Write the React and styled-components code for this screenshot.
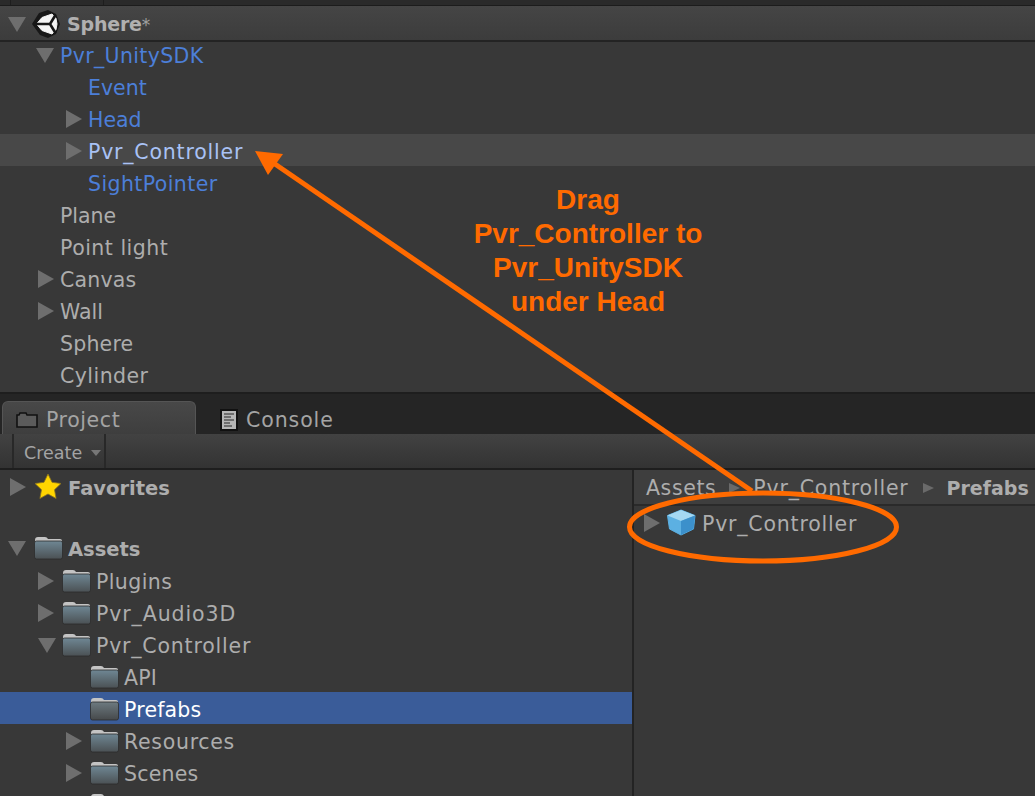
import React from 'react';
import styled, { createGlobalStyle } from 'styled-components';

const Global = createGlobalStyle`
  html, body { margin: 0; padding: 0; background: #383838; }
  body { width: 1035px; height: 796px; overflow: hidden; }
`;
const Page = styled.div`
  position: relative; width: 1035px; height: 796px; overflow: hidden;
  background: #383838; display: flex; flex-direction: column;
  font-family: "DejaVu Sans", "Open Sans", sans-serif; font-size: 20.5px; color: #adadad;
`;
const TopStrip = styled.div`
  height: 5px; flex: none; background: #2a2a2a; display: flex; padding-left: 10px; gap: 92px;
  border-bottom: 1px solid #1c1c1c;
  & > i { width: 1px; background: #1e1e1e; }
`;
const SceneHeader = styled.div`
  height: 36px; flex: none; display: flex; align-items: center; box-sizing: border-box;
  background: linear-gradient(#454545, #3c3c3c); border-bottom: 2px solid #232323; padding: 2px 0 0 8px;
`;
const LogoSlot = styled.span`display: inline-flex; margin-left: 6px; flex: none;`;
const SceneName = styled.span`font-weight: 700; color: #b0b0b0; margin-left: 7px; font-size: 19px; letter-spacing: -.2px;
  & > small { font-weight: 400; font-size: 17px; color:#a0a0a0; }`;
const Hierarchy = styled.div`height: 354px; margin-top: -4px; flex: none; display: flex; flex-direction: column;`;
const Row = styled.div`
  height: 32px; flex: none; display: flex; align-items: center; box-sizing: border-box;
  padding: ${p => p.$top ?? 4}px 0 0 ${p => p.$indent}px;
  background: ${p => p.$bg || 'transparent'};
  color: ${p => p.$color || '#adadad'};
  font-weight: ${p => p.$bold ? 700 : 400};
  font-size: ${p => p.$bold ? '19.5px' : 'inherit'};
  letter-spacing: ${p => p.$track ?? 0.2}px; white-space: nowrap;
`;
const ArrowSlot = styled.span`width: ${p => p.$w ?? 22}px; flex: none; display: flex; justify-content: flex-start; margin-top: -2px;`;
const IconGap = styled.span`display: inline-flex; margin: -4px ${p => p.$gap ?? 6}px 0 0; flex: none;`;
const TabBar = styled.div`
  height: 42px; flex: none; background: #252525; display: flex; align-items: flex-end;
  border-top: 2px solid #1e1e1e; box-sizing: border-box; padding-left: 2px;
`;
const Tab = styled.div`
  height: ${p => p.$active ? 33 : 30}px; box-sizing: border-box;
  display: flex; align-items: center; gap: 8px; padding: ${p => p.$active ? 3 : 1}px 0 0 ${p => p.$active ? 13 : 24}px;
  ${p => p.$active ? 'width:194px; background: linear-gradient(#484848,#3e3e3e); border-radius: 6px 6px 0 0; border: 1px solid #555; border-bottom: none;' : ''}
  color: #a4a4a4; letter-spacing: ${p => p.$active ? .6 : .9}px;
`;
const Toolbar = styled.div`
  height: 36px; flex: none; display: flex; box-sizing: border-box; padding-left: 12px;
  background: linear-gradient(#424242, #333); border-bottom: 2px solid #1e1e1e;
`;
const CreateButton = styled.div`
  width: 94px; box-sizing: border-box; display: flex; align-items: center; gap: 9px; padding: 3px 0 0 10px;
  border-left: 2px solid #282828; border-right: 2px solid #282828; font-size: 17.5px; color: #a4a4a4;
`;
const Panels = styled.div`flex: 1; display: flex; min-height: 0;`;
const LeftPanel = styled.div`width: 632px; flex: none; display: flex; flex-direction: column;`;
const Spacer = styled.div`height: 30px; flex: none;`;
const RightPanel = styled.div`flex: 1; border-left: 2px solid #232323; display: flex; flex-direction: column;`;
const Crumbs = styled.div`
  height: 36px; flex: none; display: flex; align-items: center; box-sizing: border-box; padding: 2px 0 0 12px;
  background: #3e3e3e; border-bottom: 2px solid #2a2a2a; letter-spacing: .6px; white-space: nowrap;
  & > b { font-size: 19px; letter-spacing: 0; }
`;
const CrumbSep = styled.span`display: inline-flex; margin: 0 ${p => p.$r}px 0 ${p => p.$l}px;`;
const CrumbPath = styled.span`letter-spacing: .8px;`;
const Overlay = styled.svg`position: absolute; left: 0; top: 0; pointer-events: none;`;
const Note = styled.div`
  position: absolute; left: 438px; top: 183px; width: 300px; text-align: center;
  font-family: "Liberation Sans", Arial, sans-serif; font-weight: 700; font-size: 28px; line-height: 34px; color: #ff6a00;
`;

const Tri = ({ down, c = '#6e6e6e' }) => (
  <svg width="18" height="18" viewBox="0 0 18 18">
    {down ? <path d="M0 2h18l-9 15z" fill={c} /> : <path d="M0 0l16 9-16 9z" fill={c} />}
  </svg>
);
const Folder = ({ dim }) => (
  <svg width="29" height="25" viewBox="0 0 29 25">
    <defs>
      <linearGradient id={dim ? 'fd' : 'fg'} x1="0" y1="0" x2="0" y2="1">
        <stop offset="0" stopColor={dim ? '#6d7a80' : '#6f8794'} />
        <stop offset="1" stopColor={dim ? '#46494b' : '#4b5154'} />
      </linearGradient>
    </defs>
    <path d="M1 5q0-3 3-3h7q2 0 3 2h12q2 0 2 2v3H1z" fill="#c4c4c4" />
    <rect x="0.500" y="6" width="28" height="18" rx="2" fill={`url(#${dim ? 'fd' : 'fg'})`} stroke="#2c2c2c" strokeWidth=".8" />
  </svg>
);
const UnityLogo = () => (
  <svg width="28" height="28" viewBox="0 0 28 28">
    <path d="M16 0l8 4 4 10-4 10-8 4-8-3-8-11 7-11z" fill="#171717" />
    <path d="M4.500 14L10 7.500 20 4l4 4.500L25 14l-1 5.500L20 24l-10-3.500z" fill="#f4f4f4" stroke="#f4f4f4" strokeLinejoin="round" />
    <path d="M18 14H4M18 14l5.500-9M18 14l5.500 9" stroke="#171717" strokeWidth="2.600" fill="none" />
  </svg>
);
const Star = () => (
  <svg width="28" height="26" viewBox="0 0 28 26">
    <path d="M14 1l4 8.300 9 1.200-6.500 6.200 1.600 8.800L14 21l-8.100 4.500 1.600-8.800L1 10.500l9-1.200z" fill="#ffd500" stroke="#8a7420" strokeWidth=".8" />
  </svg>
);
const Cube = () => (
  <svg width="29" height="27" viewBox="0 0 29 27">
    <path d="M14 1L28 6.500 26.500 20 14 26 2.500 20 .5 6.500z" fill="#5cb0e2" stroke="#5cb0e2" strokeLinejoin="round" />
    <path d="M14 1L28 6.500 14 12 .5 6.500z" fill="#a5d8f2" />
    <path d="M14 12L28 6.500 26.500 20 14 26z" fill="#3c90cb" />
  </svg>
);
const TabFolder = () => (
  <svg width="22" height="18" viewBox="0 0 22 18">
    <path d="M1 16V4h2l1-2h6l1 2h10v12z" fill="#5b5b5b" stroke="#111" strokeWidth="1.600" />
  </svg>
);
const ConsoleIcon = () => (
  <svg width="18" height="22" viewBox="0 0 18 22">
    <rect width="18" height="22" fill="#111" />
    <rect x="2" y="2" width="14" height="18" fill="#b5b5b5" />
    <path d="M4 5h10M4 8h7M4 11h10M4 14h6M4 17h8" stroke="#555" strokeWidth="1.300" />
  </svg>
);
const SmallTri = () => (
  <svg width="13" height="12" viewBox="0 0 13 12"><path d="M1 1l11 5-11 5z" fill="#6a6a6a" /></svg>
);

const BLUE = '#4c7fd8';
const scene = [
  { t: 'Pvr_UnitySDK', i: 36, a: 'd', c: BLUE, w: 24, k: .35 },
  { t: 'Event', i: 88, c: BLUE, k: 0 },
  { t: 'Head', i: 66, a: 'r', c: BLUE, k: 0 },
  { t: 'Pvr_Controller', i: 66, a: 'r', c: '#a9c2f5', bg: '#484848', k: .8 },
  { t: 'SightPointer', i: 88, c: BLUE, k: .4 },
  { t: 'Plane', i: 60, k: 0 },
  { t: 'Point light', i: 60, k: .5 },
  { t: 'Canvas', i: 38, a: 'r' },
  { t: 'Wall', i: 38, a: 'r', k: 0 },
  { t: 'Sphere', i: 60 },
  { t: 'Cylinder', i: 60, k: .45 },
];
const files = [
  { t: 'Plugins', i: 38, a: 'r', k: .4 },
  { t: 'Pvr_Audio3D', i: 38, a: 'r', k: .9 },
  { t: 'Pvr_Controller', i: 38, a: 'd', k: .8 },
  { t: 'API', i: 90 },
  { t: 'Prefabs', i: 90, sel: true },
  { t: 'Resources', i: 66, a: 'r', w: 24, k: .7 },
  { t: 'Scenes', i: 66, a: 'r', w: 24 },
  { t: '', i: 90 },
];

export default function App() {
  return (
    <Page>
      <Global />
      <TopStrip><i /><i /></TopStrip>
      <SceneHeader>
        <Tri down />
        <LogoSlot><UnityLogo /></LogoSlot>
        <SceneName>Sphere<small>*</small></SceneName>
      </SceneHeader>
      <Hierarchy>
        {scene.map(r => (
          <Row key={r.t} $indent={r.i} $color={r.c} $bg={r.bg} $track={r.k}>
            {r.a && <ArrowSlot $w={r.w}><Tri down={r.a === 'd'} /></ArrowSlot>}
            {r.t}
          </Row>
        ))}
      </Hierarchy>
      <TabBar>
        <Tab $active><TabFolder />Project</Tab>
        <Tab><ConsoleIcon />Console</Tab>
      </TabBar>
      <Toolbar>
        <CreateButton>Create
          <svg width="10" height="6" viewBox="0 0 10 6"><path d="M0 0h10L5 6z" fill="#777" /></svg>
        </CreateButton>
      </Toolbar>
      <Panels>
        <LeftPanel>
          <Row $indent={10} $bold $track={0}><ArrowSlot $w={24}><Tri /></ArrowSlot><IconGap $gap={6}><Star /></IconGap>Favorites</Row>
          <Spacer />
          <Row $indent={8} $bold $track={0} $top={2}><ArrowSlot $w={26}><Tri down /></ArrowSlot><IconGap $gap={5}><Folder /></IconGap>Assets</Row>
          {files.map((r, n) => (
            <Row key={n} $indent={r.i} $bg={r.sel ? '#3a5c99' : undefined} $color={r.sel ? '#fff' : undefined} $track={r.k}>
              {r.a && <ArrowSlot $w={r.w || 24}><Tri down={r.a === 'd'} /></ArrowSlot>}
              <IconGap $gap={5}><Folder dim={r.sel} /></IconGap>{r.t}
            </Row>
          ))}
        </LeftPanel>
        <RightPanel>
          <Crumbs>Assets<CrumbSep $l={12} $r={12}><SmallTri /></CrumbSep><CrumbPath>Pvr_Controller</CrumbPath><CrumbSep $l={13} $r={12}><SmallTri /></CrumbSep><b>Prefabs</b></Crumbs>
          <Row $indent={10} $track={.8}>
            <ArrowSlot $w={23}><Tri /></ArrowSlot>
            <IconGap $gap={6}><Cube /></IconGap>Pvr_Controller
          </Row>
        </RightPanel>
      </Panels>
      <Overlay width="1035" height="796" viewBox="0 0 1035 796">
        <path d="M752 491L272 162" stroke="#ff6a00" strokeWidth="5" fill="none" />
        <path d="M255 151L283 154 268 175z" fill="#ff6a00" />
        <ellipse cx="763" cy="527" rx="133.500" ry="34" fill="none" stroke="#ff6a00" strokeWidth="5" />
      </Overlay>
      <Note>Drag<br />Pvr_Controller to<br />Pvr_UnitySDK<br />under Head</Note>
    </Page>
  );
}
